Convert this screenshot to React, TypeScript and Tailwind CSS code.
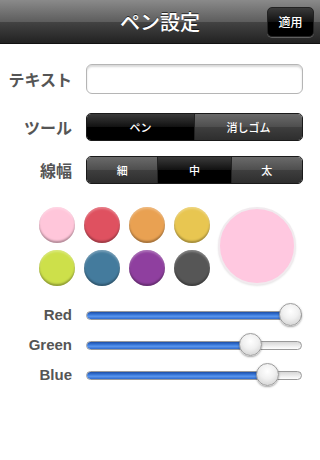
import React from "react";

const jp = { fontFamily: '"Noto Sans CJK JP", "Liberation Sans", sans-serif' };
const lat = { fontFamily: '"Liberation Sans", Arial, sans-serif' };

const swatches = ["#ffc6da", "#df5160", "#e9a152", "#e8c651", "#cde04a", "#447b9d", "#8f3f9f", "#565656"];

function Seg({ items, active, widths }: { items: string[]; active: number; widths: number[] }) {
  return (
    <div className="flex h-[28px] w-[217px] rounded-[5px] overflow-hidden border border-[#1a1a1a] shadow-[0_1px_0_rgba(255,255,255,0.8)]">
      {items.map((t, i) => (
        <div
          key={t}
          style={{ width: widths[i] }}
          className={
            "flex items-center justify-center text-[11px] font-medium text-white " +
            (i === active
              ? "bg-[linear-gradient(#3a3a3a,#111_50%,#000_51%,#000)]"
              : "bg-[linear-gradient(#6a6a6a,#4e4e4e_50%,#3e3e3e_51%,#2e2e2e)]") +
            (i > 0 ? " border-l border-[#222]" : "")
          }
        >
          {t}
        </div>
      ))}
    </div>
  );
}

function Slider({ label, value }: { label: string; value: number }) {
  const left = (value / 255) * 193;
  return (
    <div className="flex items-center h-[30px]">
      <div className="w-[72px] text-right text-[15px] font-bold text-[#555]" style={lat}>
        {label}
      </div>
      <div className="relative ml-[14px] w-[216px] h-[30px] flex items-center">
        <div className="w-full h-[9px] rounded-full border border-[#9a9a9a] bg-[linear-gradient(#d6d6d6,#ffffff)] overflow-hidden">
          <div
            className="h-full rounded-full bg-[linear-gradient(#1d4fa8,#3f7fe0_45%,#5e98ec_60%,#2e6ad0)]"
            style={{ width: left + 11 }}
          />
        </div>
        <div
          className="absolute top-[3px] w-[23px] h-[23px] rounded-full border border-[#9c9c9c] bg-[radial-gradient(circle_at_50%_35%,#ffffff,#f0f0f0_45%,#c8c8c8)] shadow-[0_1px_2px_rgba(0,0,0,0.35)]"
          style={{ left }}
        />
      </div>
    </div>
  );
}

export default function App() {
  return (
    <div className="w-[320px] h-[460px] bg-white overflow-hidden" style={jp}>
      <div className="h-[44px] flex items-center bg-[linear-gradient(#8a8a8a,#5e5e5e_50%,#434343_51%,#222)] border-b border-[#111]">
        <div className="w-[53px]" />
        <div className="flex-1 text-center text-[20px] font-medium text-white [text-shadow:0_-1px_0_rgba(0,0,0,0.6)]">
          ペン設定
        </div>
        <div className="w-[53px] flex">
          <div className="w-[47px] h-[30px] rounded-[5px] border border-[#222] bg-[linear-gradient(#3a3a3a,#111_50%,#000_51%,#000)] shadow-[0_1px_0_rgba(255,255,255,0.25)] flex items-center justify-center text-[12px] font-medium text-white">
            適用
          </div>
        </div>
      </div>

      <div className="flex items-center mt-[20px]">
        <div className="w-[72px] text-right text-[16px] font-semibold text-[#555]">テキスト</div>
        <div className="ml-[14px] w-[217px] h-[30px] rounded-[6px] border border-[#b5b5b5] bg-white shadow-[inset_0_2px_2px_rgba(0,0,0,0.15)]" />
      </div>

      <div className="flex items-center mt-[19px]">
        <div className="w-[72px] text-right text-[16px] font-semibold text-[#555]">ツール</div>
        <div className="ml-[14px]">
          <Seg items={["ペン", "消しゴム"]} active={0} widths={[108, 109]} />
        </div>
      </div>

      <div className="flex items-center mt-[15px]">
        <div className="w-[72px] text-right text-[16px] font-semibold text-[#555]">線幅</div>
        <div className="ml-[14px]">
          <Seg items={["細", "中", "太"]} active={1} widths={[71, 74, 72]} />
        </div>
      </div>

      <div className="flex mt-[23px] pl-[39px]">
        <div className="grid grid-cols-4 gap-x-[9px] gap-y-[7px] w-[171px]">
          {swatches.map((c) => (
            <div
              key={c}
              className="w-[36px] h-[36px] rounded-full shadow-[inset_0_-2px_2px_rgba(0,0,0,0.3),inset_0_2px_2px_rgba(255,255,255,0.25)]"
              style={{ backgroundColor: c }}
            />
          ))}
        </div>
        <div className="ml-[8px] w-[78px] h-[78px] rounded-full bg-[#ffc8e0] border-[2px] border-[#f1eaee] shadow-[0_1px_2px_rgba(0,0,0,0.1)]" />
      </div>

      <div className="mt-[14px]">
        <Slider label="Red" value={255} />
        <Slider label="Green" value={202} />
        <Slider label="Blue" value={224} />
      </div>
    </div>
  );
}
